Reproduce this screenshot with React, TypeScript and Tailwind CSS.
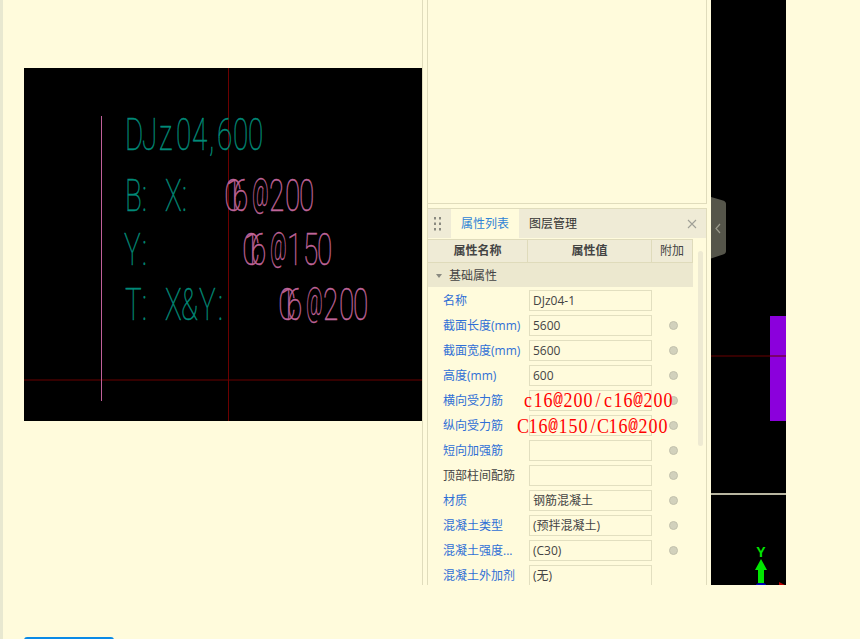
const FONT = '"Open Sans", "Noto Sans CJK SC", sans-serif';

interface PropRow {
  label: string;
  value: string;
  dark?: boolean;
  dot?: boolean;
}

const rows: PropRow[] = [
  { label: "名称", value: "DJz04-1", dot: false },
  { label: "截面长度(mm)", value: "5600" },
  { label: "截面宽度(mm)", value: "5600" },
  { label: "高度(mm)", value: "600" },
  { label: "横向受力筋", value: "" },
  { label: "纵向受力筋", value: "" },
  { label: "短向加强筋", value: "" },
  { label: "顶部柱间配筋", value: "", dark: true },
  { label: "材质", value: "钢筋混凝土" },
  { label: "混凝土类型", value: "(预拌混凝土)" },
  { label: "混凝土强度...", value: "(C30)" },
  { label: "混凝土外加剂", value: "(无)", dot: false },
];

// CAD text: each glyph has its own x, the drawing squeezes them tall and narrow
function CadText({
  text,
  xs,
  base,
  color,
  sx = 0.62,
}: {
  text: string;
  xs: number[];
  base: number;
  color: string;
  sx?: number;
}) {
  return (
    <text
      transform={`translate(0 ${base}) scale(${sx} 1)`}
      x={xs.map((x) => (x / sx).toFixed(1)).join(" ")}
      y="0"
      fontFamily="Roboto, sans-serif"
      fontWeight={100}
      fontSize={45}
      fill={color}
      stroke={color}
      strokeWidth={0.5}
    >
      {text}
    </text>
  );
}

function Rebar({ x, base, tail }: { x: number; base: number; tail: string }) {
  const pink = "#c0659a";
  return (
    <>
      <CadText text="C16" xs={[x, x + 2, x + 9]} base={base} color={pink} />
      <text
        transform={`translate(${x + 28} ${base - 5}) scale(0.4 0.85)`}
        fontFamily="Roboto, sans-serif"
        fontWeight={100}
        fontSize={45}
        fill={pink}
        stroke={pink}
        strokeWidth={0.5}
      >
        @
      </text>
      <CadText text={tail} xs={[x + 45, x + 61, x + 75]} base={base} color={pink} />
    </>
  );
}

function CadCanvas() {
  const teal = "#008a78";
  return (
    <svg width="398" height="353" viewBox="24 68 398 353" className="block bg-black">
      <line x1="228.5" y1="68" x2="228.5" y2="421" stroke="#6b0000" />
      <line x1="24" y1="380" x2="422" y2="380" stroke="#6b0000" />
      <line x1="101.5" y1="116" x2="101.5" y2="401" stroke="#c0609a" />
      <CadText text="DJz04,600" xs={[125, 142, 159, 176, 192, 209, 217, 233, 248]} base={150} color={teal} />
      <CadText text="B:" xs={[125, 142]} base={211} color={teal} />
      <CadText text="X:" xs={[165, 182]} base={211} color={teal} />
      <CadText text="Y:" xs={[124, 142]} base={265} color={teal} />
      <CadText text="T:" xs={[125, 142]} base={320} color={teal} />
      <CadText text="X&Y:" xs={[165, 181, 199, 218]} base={320} color={teal} />
      <Rebar x={224} base={211} tail="200" />
      <Rebar x={242} base={265} tail="150" />
      <Rebar x={278} base={320} tail="200" />
    </svg>
  );
}

function SideViewport() {
  return (
    <div className="relative w-[75px] h-[585px] bg-black overflow-hidden">
      <svg width="75" height="585" viewBox="711 0 75 585" className="absolute left-0 top-0">
        <rect x="770" y="316" width="16" height="105" fill="#8b00dc" />
        <line x1="711" y1="356" x2="786" y2="356" stroke="#6b0000" />
        <rect x="711" y="493" width="75" height="2" fill="#b8b5a0" />
        <text
          x="761"
          y="557"
          textAnchor="middle"
          fontFamily="Liberation Sans, sans-serif"
          fontWeight={700}
          fontSize={14}
          fill="#00e600"
        >
          Y
        </text>
        <polygon points="761,559 767,570 764,570 764,583 758,583 758,570 755,570" fill="#00e600" />
        <ellipse cx="761" cy="585" rx="5" ry="2" fill="#0000c0" />
        <polygon points="779,582 785,585 779,585" fill="#c00000" />
        <path
          d="M711 197 L723 200.5 Q726 201.5 726 204 L726 251 Q726 253.5 723 254.5 L711 258.5 Z"
          fill="#55554a"
        />
        <path d="M720 224 L716 228.5 L720 233" fill="none" stroke="#9a9a8c" strokeWidth={1.2} />
      </svg>
    </div>
  );
}

function PropertyPanel() {
  return (
    <div className="flex-1 min-h-0 mt-[4px] border-t border-r border-[#e0dcbc] bg-[#fffbdc] overflow-hidden relative text-[12px] text-[#444]">
      <div className="flex items-center h-[29px] bg-[#efebd6]">
        <svg width="8" height="14" viewBox="0 0 8 14" className="ml-[6px] mr-[9px]" fill="#8a8a80">
          {[0, 5.5, 11].map((y) => (
            <g key={y}>
              <rect x="0" y={y} width="2" height="2.5" />
              <rect x="5" y={y} width="2" height="2.5" />
            </g>
          ))}
        </svg>
        <div className="w-[68px] h-full flex items-center justify-center bg-[#fffbdc] text-[#2f84d6]">属性列表</div>
        <div className="w-[68px] h-full flex items-center justify-center text-[#333]">图层管理</div>
        <svg width="10" height="10" viewBox="0 0 10 10" className="ml-auto mr-[9px]" stroke="#a0a096" strokeWidth={1.1}>
          <path d="M1 1 L9 9 M9 1 L1 9" />
        </svg>
      </div>
      <div className="w-[265px] mt-[1px] flex h-[24px] bg-[#efebd6] border-y border-r border-[#dfdbbb] font-semibold text-[#444]">
        <div className="w-[100px] flex items-center justify-center border-r border-[#dfdbbb]">属性名称</div>
        <div className="w-[124px] flex items-center justify-center border-r border-[#dfdbbb]">属性值</div>
        <div className="flex-1 flex items-center justify-center font-normal">附加</div>
      </div>
      <div className="w-[265px] h-[24px] pt-[2px] flex items-center bg-[#ece8cf] text-[#444]">
        <span className="ml-[8px] mr-[7px] w-0 h-0 border-x-[3px] border-x-transparent border-t-[4px] border-t-[#8a8a80]" />
        基础属性
      </div>
      <div className="pt-[1px] w-[265px]">
        {rows.map((r) => (
          <div key={r.label} className="flex items-center h-[25px]">
            <div className={`w-[101px] pl-[15px] whitespace-nowrap ${r.dark ? "text-[#444]" : "text-[#2f6fd6]"}`}>
              {r.label}
            </div>
            <div className="w-[123px] h-[21px] flex items-center px-[3px] border border-[#e2dfc0] whitespace-nowrap">
              {r.value}
            </div>
            {r.dot !== false && (
              <span className="ml-[17px] w-[9px] h-[9px] rounded-full bg-[#d2d1bc] border border-[#c2c1ac]" />
            )}
          </div>
        ))}
      </div>
      <div className="absolute left-[270px] top-[42px] w-[5px] h-[195px] rounded bg-[#eeead2]" />
    </div>
  );
}

// typed-over note: fixed cell per glyph, like a half-width CJK system font
function RedNote({ text, className }: { text: string; className: string }) {
  return (
    <div
      className={`absolute flex text-[#ff0000] text-[18px] leading-[22px] scale-y-[1.2] ${className}`}
      style={{ fontFamily: '"Liberation Serif", serif' }}
    >
      {text.split("").map((ch, i) =>
        ch === "@" ? (
          <span key={i} className="w-[10px] flex justify-center text-[16px]" style={{ fontFamily: '"Liberation Mono", monospace' }}>
            @
          </span>
        ) : (
          <span key={i} className="w-[10px] flex justify-center">
            {ch}
          </span>
        ),
      )}
    </div>
  );
}

export default function App() {
  return (
    <div className="relative flex w-[860px] h-[639px] overflow-hidden bg-[#fffbdc]" style={{ fontFamily: FONT }}>
      <div className="w-[3px] h-full bg-[#e8e8d0]" />
      <div className="w-[419px] pl-[21px] pt-[68px]">
        <CadCanvas />
        <div className="mt-[216px] w-[90px] h-[32px] rounded-[3px] bg-[#0a8ae6]" />
      </div>
      <div className="w-[289px] h-[585px] flex pr-[2px]">
        <div className="w-[5px] border-l border-[#e0dcbc]" />
        <div className="w-[280px] h-full flex flex-col border-l border-[#e0dcbc]">
          <div className="h-[204px] border-b border-r border-[#e0dcbc]" />
          <PropertyPanel />
        </div>
      </div>
      <SideViewport />
      <RedNote text="c16@200/c16@200" className="left-[523px] top-[389px]" />
      <RedNote text="C16@150/C16@200" className="left-[518px] top-[415px]" />
    </div>
  );
}
